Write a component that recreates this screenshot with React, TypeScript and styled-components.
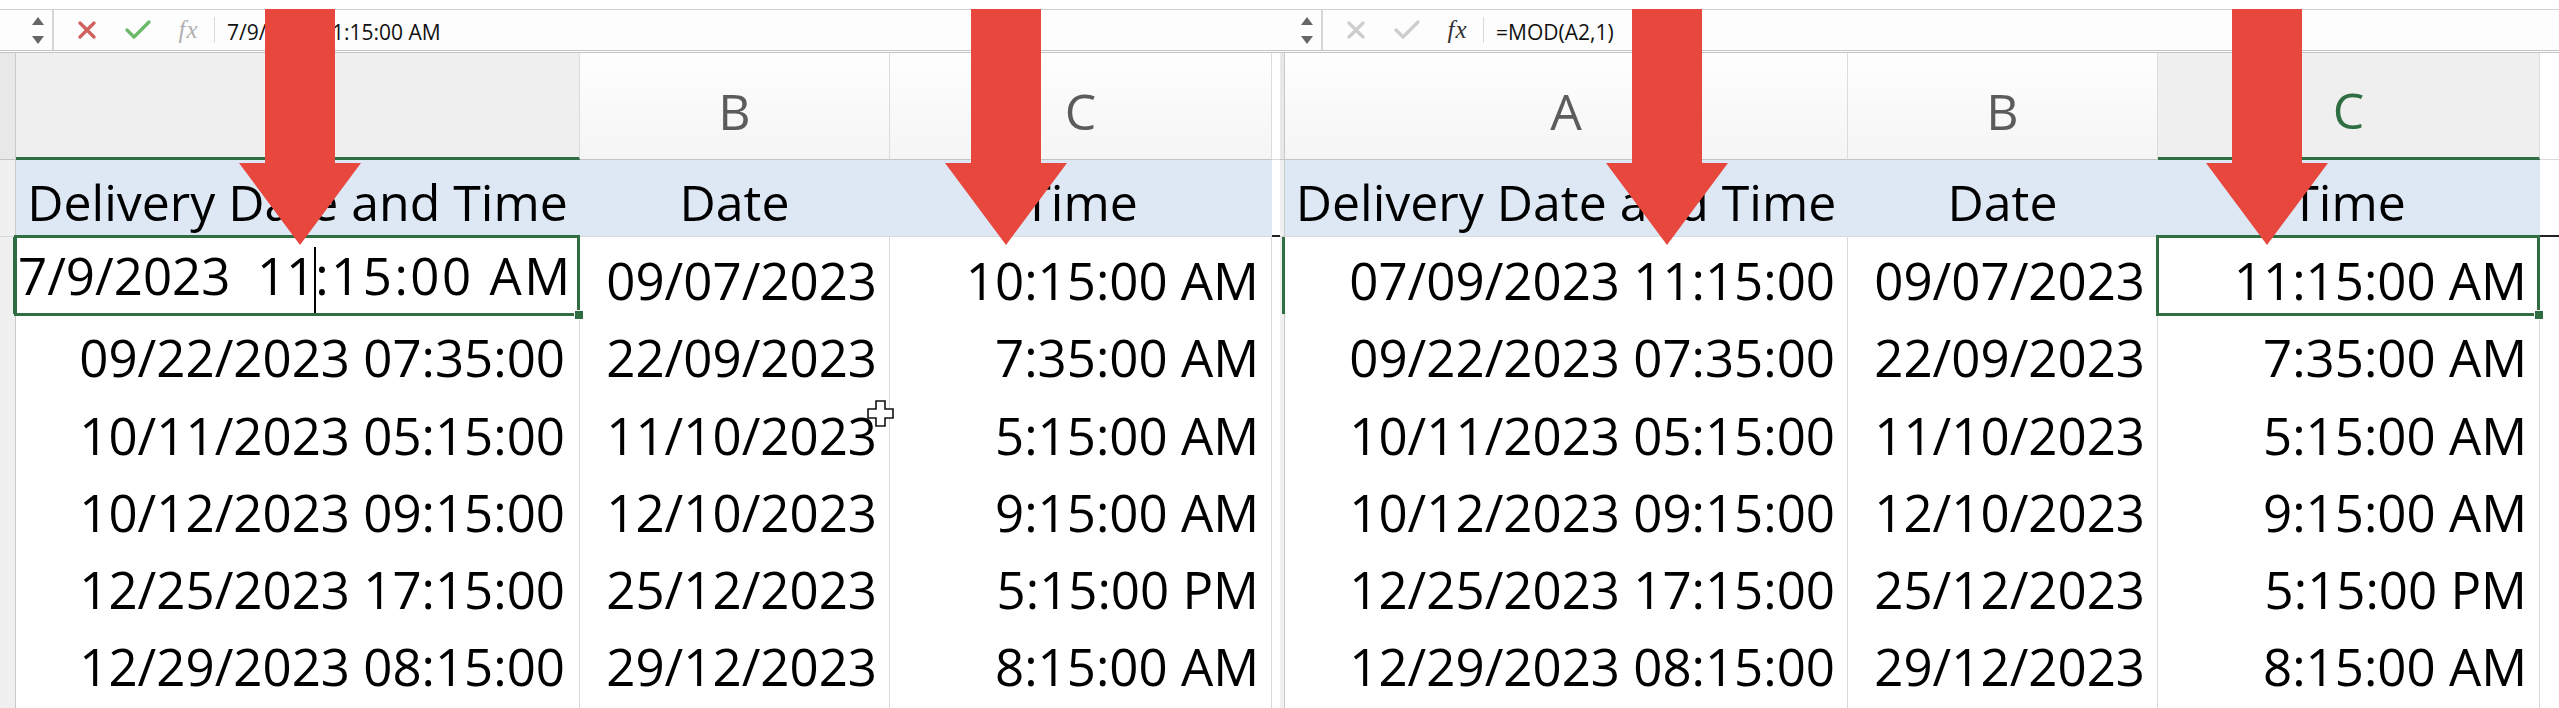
import React from 'react'
import styled, { createGlobalStyle } from 'styled-components'

const GREEN = '#2f6e43'
const ARROW = '#e8473d'
const BAND = '#dee8f5'
const GRID = '#d9d9d9'

const GlobalStyle = createGlobalStyle`
  html, body {
    margin: 0;
    padding: 0;
    background: #fff;
  }
  body {
    width: 2559px;
    height: 708px;
    overflow: hidden;
    font-family: 'Open Sans', 'Liberation Sans', sans-serif;
  }
`

const Screen = styled.div`
  position: relative;
  display: flex;
  width: 2559px;
  height: 708px;
  padding-top: 9px;
  box-sizing: border-box;
  overflow: hidden;
  background: #fff;
`

const PaneBox = styled.section<{ $width: number }>`
  flex: none;
  width: ${p => p.$width}px;
  display: flex;
  flex-direction: column;
`

// formula bar
const FormulaBar = styled.div`
  display: flex;
  align-items: center;
  height: 47px;
  box-sizing: border-box;
  border-top: 1px solid #d2d2d2;
  border-bottom: 3px double #c4c4c4;
  background: #fdfdfd;
`

const NameBox = styled.div<{ $width: number }>`
  flex: none;
  width: ${p => p.$width}px;
  height: 40px;
  box-sizing: border-box;
  display: flex;
  flex-direction: column;
  align-items: flex-end;
  justify-content: center;
  gap: 11px;
  padding-right: 8px;
  border-right: 2px solid #d6d6d6;
`

const SpinUp = styled.span`
  width: 0;
  height: 0;
  border-left: 6px solid transparent;
  border-right: 6px solid transparent;
  border-bottom: 8px solid #666;
`

const SpinDown = styled(SpinUp)`
  border-bottom: none;
  border-top: 8px solid #666;
`

const IconGroup = styled.div`
  display: flex;
  align-items: center;
  padding-left: 7px;
`

const IconSlot = styled.div`
  width: 51px;
  display: flex;
  align-items: center;
  justify-content: center;
`

const FxGlyph = styled.span<{ $color: string }>`
  font-family: 'Liberation Serif', 'DejaVu Serif', serif;
  font-style: italic;
  font-size: 25px;
  color: ${p => p.$color};
  letter-spacing: 1px;
`

const BarSeparator = styled.span`
  width: 1px;
  height: 26px;
  background: #dadada;
`

const FormulaText = styled.span`
  margin-left: 12px;
  padding-top: 3px;
  font-size: 21px;
  color: #111;
  white-space: pre;
`

// grid
const HeaderRow = styled.div<{ $cols: string }>`
  display: grid;
  grid-template-columns: ${p => p.$cols};
  height: 107px;
  flex: none;
`

const Row = styled.div<{ $cols: string }>`
  display: grid;
  grid-template-columns: ${p => p.$cols};
  height: 77.2px;
  flex: none;
`

const Corner = styled.div`
  box-sizing: border-box;
  background: #e8e8e8;
  border-right: 1px solid #c8c8c8;
  border-bottom: 1px solid #c4c4c4;
`

const ColHead = styled.div<{ $selected?: boolean; $green?: boolean }>`
  display: flex;
  align-items: center;
  justify-content: center;
  box-sizing: border-box;
  border-right: 1px solid #dcdcdc;
  border-bottom: ${p => (p.$selected ? `3px solid ${GREEN}` : '1px solid #c4c4c4')};
  background: ${p => (p.$selected ? '#efefef' : 'linear-gradient(#fefefe, #f5f5f5)')};
  color: ${p => (p.$green ? GREEN : '#5c5c5c')};
  font-size: 50px;
  padding-top: 9px;
`

const RowHead = styled.div<{ $active?: boolean }>`
  box-sizing: border-box;
  background: #f0f0f0;
  border-right: ${p => (p.$active ? `3px solid ${GREEN}` : '1px solid #c9c9c9')};
  border-bottom: 1px solid #d6d6d6;
`

const Cell = styled.div<{ $align: 'left' | 'right' | 'center'; $pad: number; $band?: boolean; $selected?: boolean; $size: number }>`
  position: relative;
  display: flex;
  align-items: center;
  justify-content: ${p => (p.$align === 'left' ? 'flex-start' : p.$align === 'center' ? 'center' : 'flex-end')};
  padding: 8px ${p => p.$pad}px 0;
  box-sizing: border-box;
  border-right: 1px solid ${p => (p.$band ? BAND : GRID)};
  border-bottom: 1px solid ${GRID};
  background: ${p => (p.$band ? BAND : '#fff')};
  font-size: ${p => p.$size}px;
  color: #000;
  white-space: pre;

  ${p =>
    p.$selected &&
    `
    &::after {
      content: '';
      position: absolute;
      top: -2px;
      left: -2px;
      right: -1px;
      bottom: -1px;
      border: 3px solid ${GREEN};
      pointer-events: none;
      z-index: 2;
    }
    &::before {
      content: '';
      position: absolute;
      right: -5px;
      bottom: -5px;
      width: 8px;
      height: 8px;
      background: ${GREEN};
      border: 1px solid #fff;
      z-index: 3;
    }
  `}
`

const Stub = styled.div<{ $mark?: boolean }>`
  box-sizing: border-box;
  background: #fff;
  border-bottom: ${p => (p.$mark ? '2px solid #222' : `1px solid ${GRID}`)};
`

const EditText = styled.span`
  white-space: pre;
  margin-top: -6px;
`

const EditTail = styled.span`
  letter-spacing: 2.5px;
`

const Caret = styled.span`
  display: inline-block;
  width: 2px;
  height: 68px;
  background: #000;
  vertical-align: middle;
  margin: 0 -1px;
`

// overlays
const ArrowMark = styled.svg<{ $x: number }>`
  position: absolute;
  top: 9px;
  left: ${p => p.$x - 61}px;
  width: 122px;
  height: 236px;
  pointer-events: none;
  z-index: 5;
`

const PlusCursor = styled.svg`
  position: absolute;
  left: 867px;
  top: 400px;
  width: 27px;
  height: 27px;
  z-index: 4;
  pointer-events: none;
`

type CellData = {
  text: React.ReactNode
  align?: 'left' | 'right' | 'center'
  size?: number
  selected?: boolean
}

type PaneProps = {
  width: number
  cols: string
  nameBox: number
  formula: string
  live: boolean
  letters: string[]
  activeCol: number
  greenLetter: boolean
  pads: number[]
  rows: CellData[][]
}

const XIcon = ({ color }: { color: string }) => (
  <svg width="18" height="18" viewBox="0 0 18 18">
    <path d="M2 2 L16 16 M16 2 L2 16" stroke={color} strokeWidth="3.2" strokeLinecap="round" />
  </svg>
)

const CheckIcon = ({ color }: { color: string }) => (
  <svg width="26" height="20" viewBox="0 0 26 20">
    <path d="M2 10 L9 17 L24 2" stroke={color} strokeWidth="3.2" fill="none" strokeLinecap="round" strokeLinejoin="round" />
  </svg>
)

const Pane = ({ width, cols, nameBox, formula, live, letters, activeCol, greenLetter, pads, rows }: PaneProps) => (
  <PaneBox $width={width}>
    <FormulaBar>
      <NameBox $width={nameBox}>
        <SpinUp />
        <SpinDown />
      </NameBox>
      <IconGroup>
        <IconSlot>
          <XIcon color={live ? '#d0605b' : '#cdcdcd'} />
        </IconSlot>
        <IconSlot>
          <CheckIcon color={live ? '#6cb86b' : '#cdcdcd'} />
        </IconSlot>
        <IconSlot>
          <FxGlyph $color={live ? '#b0b0b0' : '#333'}>fx</FxGlyph>
        </IconSlot>
      </IconGroup>
      <BarSeparator />
      <FormulaText>{formula}</FormulaText>
    </FormulaBar>

    <HeaderRow $cols={cols}>
      <Corner />
      {letters.map((l, i) => (
        <ColHead key={i} $selected={i === activeCol} $green={greenLetter && i === activeCol}>
          {l}
        </ColHead>
      ))}
      <Stub />
    </HeaderRow>

    {rows.map((r, ri) => (
      <Row $cols={cols} key={ri}>
        <RowHead $active={ri === 1} />
        {r.map((c, ci) => (
          <Cell
            key={ci}
            $band={ri === 0}
            $align={c.align ?? (ri === 0 ? 'center' : 'right')}
            $pad={c.align === 'left' ? 2 : pads[ci]}
            $size={c.size ?? (ri === 0 ? 50 : 51)}
            $selected={c.selected}
          >
            {c.text}
          </Cell>
        ))}
        <Stub $mark={ri === 0} />
      </Row>
    ))}
  </PaneBox>
)

const band: CellData[] = [{ text: 'Delivery Date and Time' }, { text: 'Date' }, { text: 'Time' }]

const body: string[][] = [
  ['09/22/2023 07:35:00', '22/09/2023', '7:35:00 AM'],
  ['10/11/2023 05:15:00', '11/10/2023', '5:15:00 AM'],
  ['10/12/2023 09:15:00', '12/10/2023', '9:15:00 AM'],
  ['12/25/2023 17:15:00', '25/12/2023', '5:15:00 PM'],
  ['12/29/2023 08:15:00', '29/12/2023', '8:15:00 AM'],
  ['', '', ''],
]

const toCells = (list: string[][]): CellData[][] => list.map(r => r.map(text => ({ text })))

const leftRows: CellData[][] = [
  band,
  [
    {
      text: (
        <EditText>
          7/9/2023{'  '}11
          <Caret />
          <EditTail>:15:00 AM</EditTail>
        </EditText>
      ),
      align: 'left',
      size: 51,
      selected: true,
    },
    { text: '09/07/2023' },
    { text: '10:15:00 AM' },
  ],
  ...toCells(body),
]

const rightRows: CellData[][] = [
  band,
  [{ text: '07/09/2023 11:15:00' }, { text: '09/07/2023' }, { text: '11:15:00 AM', selected: true }],
  ...toCells(body),
]

const arrows = [300, 1006, 1667, 2267]

export default function App() {
  return (
    <>
      <GlobalStyle />
      <Screen>
        <Pane
          width={1280}
          cols="16px 564px 310px 382px 8px"
          nameBox={54}
          formula="7/9/2023 11:15:00 AM"
          live
          letters={['', 'B', 'C']}
          activeCol={0}
          greenLetter={false}
          pads={[14, 12, 12]}
          rows={leftRows}
        />
        <Pane
          width={1279}
          cols="5px 563px 310px 382px 19px"
          nameBox={43}
          formula="=MOD(A2,1)"
          live={false}
          letters={['A', 'B', 'C']}
          activeCol={2}
          greenLetter
          pads={[12, 12, 12]}
          rows={rightRows}
        />

        {arrows.map(x => (
          <ArrowMark key={x} $x={x} viewBox="0 0 122 236">
            <polygon points="26,0 96,0 96,154 122,154 61,236 0,154 26,154" fill={ARROW} />
          </ArrowMark>
        ))}

        <PlusCursor viewBox="0 0 27 27">
          <polygon
            points="9,1 18,1 18,9 26,9 26,18 18,18 18,26 9,26 9,18 1,18 1,9 9,9"
            fill="#fff"
            stroke="#111"
            strokeWidth="1.6"
          />
        </PlusCursor>
      </Screen>
    </>
  )
}
